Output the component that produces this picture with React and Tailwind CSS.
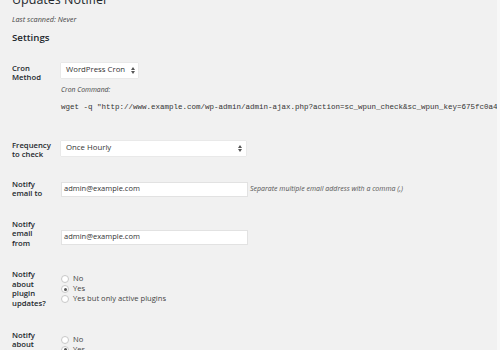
import React from 'react';

const font = { fontFamily: '"Open Sans", "Noto Sans", sans-serif' };

// little up/down arrows of a native select
function Arrows() {
  return (
    <svg width="4" height="7" viewBox="0 0 4 7" className="shrink-0">
      <polygon points="0,3 2,0 4,3" fill="#555" />
      <polygon points="0,4 4,4 2,7" fill="#555" />
    </svg>
  );
}

function Radio({ checked, label }) {
  return (
    <label className="flex items-center h-[10px] text-[7.6px] text-[#444]">
      <span className="w-[8px] h-[8px] rounded-full bg-white border border-[#c8c8c8] flex items-center justify-center mr-[4px] shrink-0">
        {checked && <span className="w-[3px] h-[3px] rounded-full bg-[#555]" />}
      </span>
      {label}
    </label>
  );
}

function Row({ label, className = '', labelClass = '', children }) {
  return (
    <div className={`flex ${className}`}>
      <div className={`w-[49px] shrink-0 text-[7.7px] leading-[9.5px] font-semibold text-[#23282d] ${labelClass}`}>{label}</div>
      <div className="flex-1 min-w-0">{children}</div>
    </div>
  );
}

export default function App() {
  return (
    <div className="w-[500px] h-[350px] overflow-hidden bg-[#f1f1f1] pl-[12px] relative" style={font}>
      <h1 className="text-[12.5px] leading-[15px] text-[#23282d] -mt-[8px] whitespace-nowrap">Updates Notifier</h1>
      <p className="mt-[6.5px] text-[7.3px] italic text-[#444] leading-[10px]">Last scanned: Never</p>
      <h2 className="mt-[8px] text-[9.7px] leading-[12px] font-semibold text-[#23282d]">Settings</h2>

      <Row label={<>Cron<br />Method</>} className="mt-[19px]" labelClass="pt-[1px]">
        <div className="flex w-fit items-center h-[15px] pl-[5px] pr-[3px] bg-white shadow-[0_0_1px_rgba(0,0,0,0.2)] text-[7.8px] text-[#333] gap-[6px]">
          WordPress Cron <Arrows />
        </div>
        <p className="mt-[7px] text-[6.8px] italic text-[#444] leading-[10px]">Cron Command:</p>
        <p className="mt-[7px] text-[7.5px] text-[#333] leading-[10px] whitespace-nowrap" style={{ fontFamily: '"Liberation Mono", monospace' }}>
          wget -q "http://www.example.com/wp-admin/admin-ajax.php?action=sc_wpun_check&amp;sc_wpun_key=675fc0a4
        </p>
      </Row>

      <Row label={<>Frequency<br />to check</>} className="mt-[29px]">
        <div className="flex items-center justify-between w-[185px] h-[15px] pl-[5px] pr-[4px] bg-white shadow-[0_0_1px_rgba(0,0,0,0.2)] text-[7.8px] text-[#333]">
          Once Hourly <Arrows />
        </div>
      </Row>

      <Row label={<>Notify<br />email to</>} className="mt-[20px]">
        <div className="mt-[2px] flex items-center">
          <div className="w-[187px] h-[15px] px-[2px] flex items-center bg-white border border-[#e2e2e2] text-[7.5px] text-[#333]">admin@example.com</div>
          <span className="ml-[2px] text-[7px] italic text-[#555] whitespace-nowrap">Separate multiple email address with a comma (,)</span>
        </div>
      </Row>

      <Row label={<>Notify<br />email<br />from</>} className="mt-[21px]">
        <div className="mt-[10px] w-[187px] h-[15px] px-[2px] flex items-center bg-white border border-[#e2e2e2] text-[7.5px] text-[#333]">admin@example.com</div>
      </Row>

      <Row label={<>Notify<br />about<br />plugin<br />updates?</>} className="mt-[22px]">
        <div className="mt-[4px]">
          <Radio label="No" />
          <Radio checked label="Yes" />
          <Radio label="Yes but only active plugins" />
        </div>
      </Row>

      <Row label={<>Notify<br />about<br />theme<br />updates?</>} className="mt-[22.5px]">
        <div className="mt-[4px]">
          <Radio label="No" />
          <Radio checked label="Yes" />
          <Radio label="Yes but only active themes" />
        </div>
      </Row>
      <div className="absolute right-0 top-0 w-[3px] h-full bg-[#f8f8f8]" />
    </div>
  );
}
